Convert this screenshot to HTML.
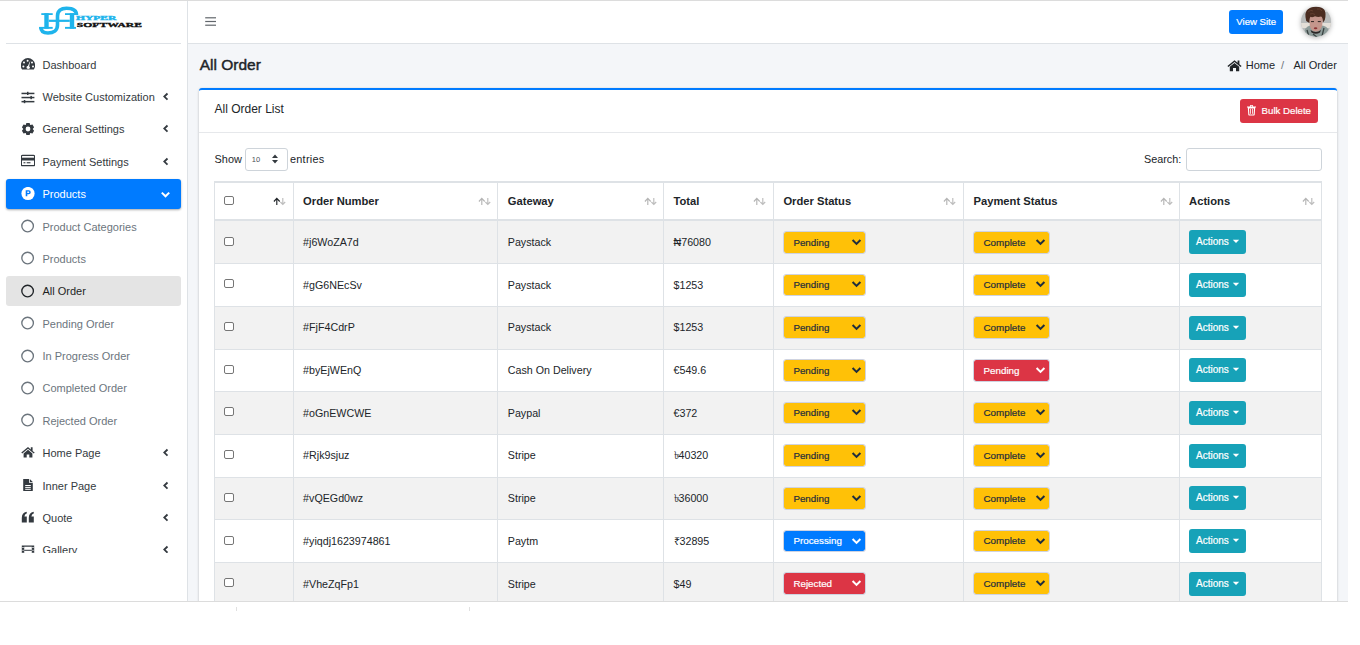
<!DOCTYPE html>
<html><head><meta charset="utf-8"><title>All Order</title>
<style>
html,body{margin:0;padding:0;}
body{width:1360px;height:645px;position:relative;overflow:hidden;background:#fff;font-family:"Liberation Sans", sans-serif;}
.t{position:absolute;white-space:pre;line-height:1;}
svg{display:block}
</style></head><body>
<div style="position:absolute;left:0px;top:0px;width:1348px;height:1px;background:#dcdcdc"></div><div style="position:absolute;left:0px;top:1px;width:187px;height:600px;background:#fff"></div><div style="position:absolute;left:187px;top:1px;width:1px;height:600px;background:#dee2e6"></div><div style="position:absolute;left:188px;top:1px;width:1160px;height:42px;background:#fff"></div><div style="position:absolute;left:188px;top:43px;width:1160px;height:1px;background:#dee2e6"></div><div style="position:absolute;left:188px;top:44px;width:1160px;height:557px;background:#f4f6f9"></div><div style="position:absolute;left:0px;top:601px;width:1348px;height:1px;background:#dcdcdc"></div><div style="position:absolute;left:236px;top:607px;width:1px;height:4px;background:#e0e0e0"></div><div style="position:absolute;left:469px;top:607px;width:1px;height:4px;background:#e0e0e0"></div><svg style="position:absolute;left:34px;top:4px;" width="112" height="35" viewBox="0 0 112 35">
<g fill="#1eb4ec">
 <rect x="7.3" y="9.2" width="11.4" height="1.8"/>
 <rect x="10.3" y="9.2" width="4.4" height="15.5"/>
 <rect x="5.2" y="22.9" width="13.5" height="1.9"/>
 <rect x="14.7" y="15.7" width="21.1" height="2.2"/>
 <rect x="35.8" y="9.2" width="4.4" height="15.5"/>
 <rect x="31" y="9.2" width="12.4" height="1.8"/>
 <rect x="31" y="22.9" width="11" height="1.9"/>
</g>
<path d="M6.8 23 C6.8 27.6, 10 29, 14 29 C19.5 29, 23.5 26.5, 23.5 21 L23.5 12 C23.5 6.5, 27 4.2, 32.5 4.2 C38.5 4.2, 42.5 6, 42.5 11" fill="none" stroke="#1eb4ec" stroke-width="3.6"/>
<text x="41.9" y="15.6" textLength="40.6" lengthAdjust="spacingAndGlyphs" font-family="Liberation Serif" font-weight="700" font-size="5.3" fill="#1eb4ec" stroke="#1eb4ec" stroke-width="0.35">HYPER</text>
<text x="42.8" y="22.5" textLength="65.2" lengthAdjust="spacingAndGlyphs" font-family="Liberation Serif" font-weight="700" font-size="7" fill="#111" stroke="#111" stroke-width="0.35">SOFTWARE</text>
</svg><div style="position:absolute;left:6px;top:43px;width:175px;height:1px;background:#dee2e6"></div><div style="position:absolute;left:0;top:44px;width:187px;height:509px;overflow:hidden"><svg style="position:absolute;left:20.5px;top:13.200000000000003px;" width="14" height="14" viewBox="0 0 14 14"><path d="M1.1 12.5 A7.2 7.2 0 1 1 12.8 12.5 Z" fill="#343a40"/><g fill="#fff"><circle cx="3" cy="5.4" r="1"/><circle cx="6.6" cy="3.7" r="1"/><circle cx="11" cy="5.4" r="1"/><circle cx="2.4" cy="9.4" r="1"/><circle cx="12" cy="9.4" r="1"/><path d="M9.4 3.2 L8.1 9.6 L9 9.9 Q9.2 12 7.2 12 Q5.4 12 5.5 10.3 Q5.6 9.2 6.9 9.1 Z"/></g></svg><div class="t" style="left:42.5px;top:15.69px;font-size:11px;color:#343a40">Dashboard</div><svg style="position:absolute;left:20.5px;top:45.58px;" width="14" height="14" viewBox="0 0 14 14"><g fill="#343a40"><rect x="0.5" y="2.7" width="12.9" height="1.5"/><rect x="0.5" y="6.8" width="12.9" height="1.5"/><rect x="0.5" y="10.9" width="12.9" height="1.5"/><rect x="6" y="1.8" width="1.5" height="3.2"/><rect x="9.4" y="5.9" width="1.5" height="3.3"/><rect x="2.8" y="10" width="1.5" height="3.2"/></g></svg><div class="t" style="left:42.5px;top:48.07px;font-size:11px;color:#343a40">Website Customization</div><svg style="position:absolute;left:161px;top:47.08px;" width="10" height="11" viewBox="0 0 10 11"><path d="M6.5 2.5 L3.3 5.6 L6.5 8.7" fill="none" stroke="#343a40" stroke-width="1.8"/></svg><svg style="position:absolute;left:20.5px;top:77.95999999999998px;" width="14" height="14" viewBox="0 0 14 14"><path d="M4.75 2.88 L5.38 0.91 L8.62 0.91 L9.25 2.88 L9.45 2.99 L11.46 2.55 L13.08 5.36 L11.70 6.89 L11.70 7.11 L13.08 8.64 L11.46 11.45 L9.45 11.01 L9.25 11.12 L8.62 13.09 L5.38 13.09 L4.75 11.12 L4.55 11.01 L2.54 11.45 L0.92 8.64 L2.30 7.11 L2.30 6.89 L0.92 5.36 L2.54 2.55 L4.55 2.99Z M9.4 7 A2.4 2.4 0 1 0 4.6 7 A2.4 2.4 0 1 0 9.4 7 Z" fill="#343a40" fill-rule="evenodd"/></svg><div class="t" style="left:42.5px;top:80.45px;font-size:11px;color:#343a40">General Settings</div><svg style="position:absolute;left:161px;top:79.46px;" width="10" height="11" viewBox="0 0 10 11"><path d="M6.5 2.5 L3.3 5.6 L6.5 8.7" fill="none" stroke="#343a40" stroke-width="1.8"/></svg><svg style="position:absolute;left:20.5px;top:110.34px;" width="14" height="14" viewBox="0 0 14 14"><rect x="0.35" y="1.4" width="13.3" height="10.3" rx="1.2" fill="none" stroke="#343a40" stroke-width="1.3"/><rect x="0.5" y="3.7" width="13" height="2.8" fill="#343a40"/><rect x="2.5" y="8.2" width="1.9" height="1.1" fill="#343a40"/><rect x="5.7" y="8.2" width="3.8" height="1.1" fill="#343a40"/></svg><div class="t" style="left:42.5px;top:112.83px;font-size:11px;color:#343a40">Payment Settings</div><svg style="position:absolute;left:161px;top:111.84px;" width="10" height="11" viewBox="0 0 10 11"><path d="M6.5 2.5 L3.3 5.6 L6.5 8.7" fill="none" stroke="#343a40" stroke-width="1.8"/></svg><div style="position:absolute;left:6px;top:135.02px;width:175px;height:30px;background:#007bff;border-radius:3px;box-shadow:0 1px 3px rgba(0,0,0,.12),0 1px 2px rgba(0,0,0,.24)"></div><svg style="position:absolute;left:20.5px;top:142.72px;" width="14" height="14" viewBox="0 0 14 14"><circle cx="7" cy="6.5" r="6.6" fill="#fff"/><path d="M4.7 3.2 L7.7 3.2 A2.05 2.05 0 0 1 7.7 7.3 L6.3 7.3 L6.3 9.2 L4.7 9.2 Z M6.3 4.6 L6.3 5.9 L7.6 5.9 A0.65 0.65 0 0 0 7.6 4.6 Z" fill="#007bff" fill-rule="evenodd"/></svg><div class="t" style="left:42.5px;top:145.21px;font-size:11px;color:#fff">Products</div><svg style="position:absolute;left:160px;top:144.52px;" width="11" height="11" viewBox="0 0 11 11"><path d="M1.8 3.6 L5.5 7.3 L9.2 3.6" fill="none" stroke="#fff" stroke-width="2"/></svg><svg style="position:absolute;left:20.5px;top:175.1px;" width="14" height="14" viewBox="0 0 14 14"><circle cx="6.6" cy="7" r="5.8" fill="none" stroke="#6c757d" stroke-width="1.35"/></svg><div class="t" style="left:42.5px;top:177.59px;font-size:11px;color:#6c757d">Product Categories</div><svg style="position:absolute;left:20.5px;top:207.48000000000002px;" width="14" height="14" viewBox="0 0 14 14"><circle cx="6.6" cy="7" r="5.8" fill="none" stroke="#6c757d" stroke-width="1.35"/></svg><div class="t" style="left:42.5px;top:209.97px;font-size:11px;color:#6c757d">Products</div><div style="position:absolute;left:6px;top:232.16000000000003px;width:175px;height:30px;background:#e4e4e4;border-radius:3px"></div><svg style="position:absolute;left:20.5px;top:239.86px;" width="14" height="14" viewBox="0 0 14 14"><circle cx="6.6" cy="7" r="5.8" fill="none" stroke="#212529" stroke-width="1.35"/></svg><div class="t" style="left:42.5px;top:242.35px;font-size:11px;color:#1f1f1f">All Order</div><svg style="position:absolute;left:20.5px;top:272.24px;" width="14" height="14" viewBox="0 0 14 14"><circle cx="6.6" cy="7" r="5.8" fill="none" stroke="#6c757d" stroke-width="1.35"/></svg><div class="t" style="left:42.5px;top:274.73px;font-size:11px;color:#6c757d">Pending Order</div><svg style="position:absolute;left:20.5px;top:304.62px;" width="14" height="14" viewBox="0 0 14 14"><circle cx="6.6" cy="7" r="5.8" fill="none" stroke="#6c757d" stroke-width="1.35"/></svg><div class="t" style="left:42.5px;top:307.11px;font-size:11px;color:#6c757d">In Progress Order</div><svg style="position:absolute;left:20.5px;top:337.0px;" width="14" height="14" viewBox="0 0 14 14"><circle cx="6.6" cy="7" r="5.8" fill="none" stroke="#6c757d" stroke-width="1.35"/></svg><div class="t" style="left:42.5px;top:339.49px;font-size:11px;color:#6c757d">Completed Order</div><svg style="position:absolute;left:20.5px;top:369.38px;" width="14" height="14" viewBox="0 0 14 14"><circle cx="6.6" cy="7" r="5.8" fill="none" stroke="#6c757d" stroke-width="1.35"/></svg><div class="t" style="left:42.5px;top:371.87px;font-size:11px;color:#6c757d">Rejected Order</div><svg style="position:absolute;left:20.5px;top:400.76000000000005px;" width="14" height="14" viewBox="0 0 14 14"><path d="M7 2 L0.3 7.6 L1.2 8.6 L7 3.8 L12.8 8.6 L13.7 7.6 L11.6 5.9 L11.6 2.2 L9.8 2.2 L9.8 4.4 Z" fill="#343a40"/><path d="M2.6 8.4 L7 4.8 L11.4 8.4 L11.4 12.6 L8.3 12.6 L8.3 9.6 L5.7 9.6 L5.7 12.6 L2.6 12.6 Z" fill="#343a40"/></svg><div class="t" style="left:42.5px;top:404.25px;font-size:11px;color:#343a40">Home Page</div><svg style="position:absolute;left:161px;top:403.26000000000005px;" width="10" height="11" viewBox="0 0 10 11"><path d="M6.5 2.5 L3.3 5.6 L6.5 8.7" fill="none" stroke="#343a40" stroke-width="1.8"/></svg><svg style="position:absolute;left:20.5px;top:434.14000000000004px;" width="14" height="14" viewBox="0 0 14 14"><path d="M2.2 1 L8 1 L8 4.8 L11.8 4.8 L11.8 12.4 Q11.8 13 11.2 13 L2.8 13 Q2.2 13 2.2 12.4 Z M8.8 1 L11.8 4 L8.8 4 Z" fill="#343a40"/><g fill="#fff"><rect x="4.2" y="7" width="5.6" height="1"/><rect x="4.2" y="8.9" width="5.6" height="1"/><rect x="4.2" y="10.8" width="5.6" height="1"/></g></svg><div class="t" style="left:42.5px;top:436.63px;font-size:11px;color:#343a40">Inner Page</div><svg style="position:absolute;left:161px;top:435.64000000000004px;" width="10" height="11" viewBox="0 0 10 11"><path d="M6.5 2.5 L3.3 5.6 L6.5 8.7" fill="none" stroke="#343a40" stroke-width="1.8"/></svg><svg style="position:absolute;left:20.5px;top:465.5200000000001px;" width="14" height="14" viewBox="0 0 14 14"><path d="M0.8 12.5 L0.8 8 Q0.8 2.8 5.6 1.8 L5.9 3.3 Q3.6 4 3.4 6.4 L5.8 6.4 L5.8 12.5 Z M7.8 12.5 L7.8 8 Q7.8 2.8 12.6 1.8 L12.9 3.3 Q10.6 4 10.4 6.4 L12.8 6.4 L12.8 12.5 Z" fill="#343a40"/></svg><div class="t" style="left:42.5px;top:469.01px;font-size:11px;color:#343a40">Quote</div><svg style="position:absolute;left:161px;top:468.0200000000001px;" width="10" height="11" viewBox="0 0 10 11"><path d="M6.5 2.5 L3.3 5.6 L6.5 8.7" fill="none" stroke="#343a40" stroke-width="1.8"/></svg><svg style="position:absolute;left:20.5px;top:498.9000000000001px;" width="14" height="14" viewBox="0 0 14 14"><path d="M0.8 2.5 L13.2 2.5 L13.2 12 L0.8 12 Z M3.2 3.8 L3.2 10.7 L10.8 10.7 L10.8 3.8 Z" fill="#343a40" fill-rule="evenodd"/><g fill="#fff"><rect x="1.4" y="4" width="1.2" height="1"/><rect x="1.4" y="6.8" width="1.2" height="1"/><rect x="1.4" y="9.6" width="1.2" height="1"/><rect x="11.4" y="4" width="1.2" height="1"/><rect x="11.4" y="6.8" width="1.2" height="1"/><rect x="11.4" y="9.6" width="1.2" height="1"/></g><rect x="3.2" y="6.8" width="7.6" height="1" fill="#343a40"/></svg><div class="t" style="left:42.5px;top:501.39px;font-size:11px;color:#343a40">Gallery</div><svg style="position:absolute;left:161px;top:500.4000000000001px;" width="10" height="11" viewBox="0 0 10 11"><path d="M6.5 2.5 L3.3 5.6 L6.5 8.7" fill="none" stroke="#343a40" stroke-width="1.8"/></svg></div><svg style="position:absolute;left:204px;top:16px;" width="13" height="10" viewBox="0 0 13 10"><g fill="#62676c"><rect x="1.2" y="1.2" width="10.8" height="1.2"/><rect x="1.2" y="4.9" width="10.8" height="1.2"/><rect x="1.2" y="8.6" width="10.8" height="1.2"/></g></svg><div style="position:absolute;left:1229px;top:10px;width:54px;height:24px;background:#007bff;border-radius:3px"></div><div class="t" style="left:1236.3px;top:17.07px;font-size:9.6px;font-weight:400;color:#fff;-webkit-text-stroke:0.2px #fff">View Site</div><svg style="position:absolute;left:1298px;top:4px;filter:drop-shadow(0 1.5px 2.5px rgba(0,0,0,.28))" width="36" height="36" viewBox="0 0 36 36">
<defs><clipPath id="av"><circle cx="18" cy="17.7" r="15"/></clipPath></defs>
<g clip-path="url(#av)">
<rect x="0" y="0" width="36" height="36" fill="#b9bcbc"/>
<rect x="0" y="0" width="36" height="8" fill="#d8d8d8"/>
<rect x="0" y="19" width="36" height="5" fill="#e4dfd8"/>
<path d="M5.5 36 L7 25 Q10 21 13 21.5 L18 27 L23 21.5 Q28 21.5 30 25 L32 30 L31 36 Z" fill="#8e9c9a"/>
<path d="M9 26 L12 36 M26 24 L23 36 M15 30 L20 34" stroke="#3a4342" stroke-width="1.3" fill="none"/>
<path d="M11.3 15 Q11.5 9.5 18 9.5 Q24.5 9.5 24.8 15 L24.2 21.5 Q22.8 27.6 17.8 27.6 Q13 27.6 11.8 21.5 Z" fill="#c4968c"/>
<path d="M12.5 26 Q18 30 23 26 L22 28.5 Q18 31 13.5 28.5 Z" fill="#2b2626"/>
<path d="M8.2 17 Q6 8 10 5 Q13 2.2 18 2.6 Q24 2.4 26.5 6 Q28.5 9.5 26.8 16 L25 18.5 Q24.8 13 23 12.6 Q20 13.6 17 12.2 Q14 13.8 12.6 12.8 Q11.3 14 11.4 19 Z" fill="#4a2c20"/><path d="M10 8 Q13 5 15 7 M19 5 Q22 4 24 7 M12 10 Q15 9 17 10.5" stroke="#6a4434" stroke-width="0.8" fill="none"/>
<rect x="13" y="17" width="3" height="1.1" fill="#3b2e2a"/><rect x="19.8" y="17" width="3" height="1.1" fill="#3b2e2a"/>
<ellipse cx="17.6" cy="24.3" rx="1.8" ry="1" fill="#8d3535"/>
</g></svg><div class="t" style="left:199.7px;top:56.68px;font-size:15.5px;font-weight:400;color:#212529;-webkit-text-stroke:0.45px #212529">All Order</div><svg style="position:absolute;left:1227px;top:59px;" width="15" height="13" viewBox="0 0 15 13"><path d="M7.5 1.2 L0.4 7 L1.4 8 L7.5 3 L13.6 8 L14.6 7 L12.4 5.2 L12.4 1.6 L10.6 1.6 L10.6 3.7 Z" fill="#212529"/><path d="M2.8 7.8 L7.5 4 L12.2 7.8 L12.2 12.2 L9 12.2 L9 9 L6 9 L6 12.2 L2.8 12.2 Z" fill="#212529"/></svg><div class="t" style="left:1245.7px;top:60.49px;font-size:11px;font-weight:400;color:#212529;">Home</div><div class="t" style="left:1281px;top:60.49px;font-size:11px;font-weight:400;color:#6c757d;">/</div><div class="t" style="left:1293.5px;top:60.49px;font-size:11px;font-weight:400;color:#212529;">All Order</div><div style="position:absolute;left:0;top:0;width:1348px;height:601px;overflow:hidden"><div style="position:absolute;left:199px;top:88px;width:1138px;height:520px;background:#fff;border-top:2px solid #007bff;border-radius:3px;box-shadow:0 0 1px rgba(0,0,0,.125),0 1px 3px rgba(0,0,0,.2);box-sizing:border-box"></div><div style="position:absolute;left:199px;top:132px;width:1138px;height:1px;background:#e6e8eb"></div></div><div class="t" style="left:214.5px;top:103.44px;font-size:12px;font-weight:400;color:#212529;">All Order List</div><div style="position:absolute;left:1240px;top:99px;width:78px;height:24px;background:#dc3545;border-radius:3px"></div><svg style="position:absolute;left:1246px;top:104px;" width="11" height="12" viewBox="0 0 11 12"><path d="M1 2.4 L10 2.4 L10 3.5 L1 3.5 Z M3.8 2.4 L4.3 0.9 L6.7 0.9 L7.2 2.4 L6.3 2.4 L6.1 1.8 L4.9 1.8 L4.7 2.4 Z M1.8 3.6 L9.2 3.6 L8.7 10.8 Q8.6 11.4 8 11.4 L3 11.4 Q2.4 11.4 2.3 10.8 Z M3 4.4 L3.4 10.5 L7.6 10.5 L8 4.4 Z" fill="#fff" fill-rule="evenodd"/><g fill="#fff"><rect x="4.2" y="4.8" width="0.8" height="5"/><rect x="6" y="4.8" width="0.8" height="5"/></g></svg><div class="t" style="left:1261.6px;top:105.62px;font-size:9.66px;font-weight:400;color:#fff;-webkit-text-stroke:0.2px #fff">Bulk Delete</div><div class="t" style="left:214.6px;top:153.77px;font-size:10.9px;font-weight:400;color:#212529;">Show</div><div style="position:absolute;left:245px;top:148px;width:43px;height:22.6px;background:#fff;border:1px solid #ced4da;border-radius:3px;box-sizing:border-box"></div><div class="t" style="left:251.8px;top:155.85px;font-size:7.5px;font-weight:400;color:#495057;">10</div><svg style="position:absolute;left:271px;top:153px;" width="8" height="12" viewBox="0 0 8 12"><path d="M4 1.5 L7 5 L1 5 Z M4 10.5 L7 7 L1 7 Z" fill="#343a40"/></svg><div class="t" style="left:290px;top:153.77px;font-size:10.9px;font-weight:400;color:#212529;letter-spacing:0.25px">entries</div><div class="t" style="left:1144px;top:153.86px;font-size:10.8px;font-weight:400;color:#212529;">Search:</div><div style="position:absolute;left:1186px;top:148px;width:135.5px;height:22.6px;background:#fff;border:1px solid #ced4da;border-radius:3px;box-sizing:border-box"></div><div style="position:absolute;left:0;top:0;width:1348px;height:601px;overflow:hidden"><div style="position:absolute;left:214px;top:181px;width:1107.5px;height:2px;background:#dee2e6"></div><div style="position:absolute;left:214px;top:183px;width:1107.5px;height:36px;background:#fff"></div><div style="position:absolute;left:214px;top:219px;width:1107.5px;height:2px;background:#dee2e6"></div><div style="position:absolute;left:214px;top:221px;width:1107.5px;height:42.5px;background:#f2f2f2"></div><div style="position:absolute;left:214px;top:263.5px;width:1107.5px;height:42.5px;background:#fff"></div><div style="position:absolute;left:214px;top:263.0px;width:1107.5px;height:1px;background:#dee2e6"></div><div style="position:absolute;left:214px;top:306px;width:1107.5px;height:43px;background:#f2f2f2"></div><div style="position:absolute;left:214px;top:305.5px;width:1107.5px;height:1px;background:#dee2e6"></div><div style="position:absolute;left:214px;top:349px;width:1107.5px;height:42.5px;background:#fff"></div><div style="position:absolute;left:214px;top:348.5px;width:1107.5px;height:1px;background:#dee2e6"></div><div style="position:absolute;left:214px;top:391.5px;width:1107.5px;height:42.5px;background:#f2f2f2"></div><div style="position:absolute;left:214px;top:391.0px;width:1107.5px;height:1px;background:#dee2e6"></div><div style="position:absolute;left:214px;top:434px;width:1107.5px;height:43px;background:#fff"></div><div style="position:absolute;left:214px;top:433.5px;width:1107.5px;height:1px;background:#dee2e6"></div><div style="position:absolute;left:214px;top:477px;width:1107.5px;height:42.5px;background:#f2f2f2"></div><div style="position:absolute;left:214px;top:476.5px;width:1107.5px;height:1px;background:#dee2e6"></div><div style="position:absolute;left:214px;top:519.5px;width:1107.5px;height:42.799999999999955px;background:#fff"></div><div style="position:absolute;left:214px;top:519.0px;width:1107.5px;height:1px;background:#dee2e6"></div><div style="position:absolute;left:214px;top:562.3px;width:1107.5px;height:42.700000000000045px;background:#f2f2f2"></div><div style="position:absolute;left:214px;top:561.8px;width:1107.5px;height:1px;background:#dee2e6"></div><div style="position:absolute;left:214px;top:181px;width:1px;height:430px;background:#dee2e6"></div><div style="position:absolute;left:293px;top:181px;width:1px;height:430px;background:#dee2e6"></div><div style="position:absolute;left:497px;top:181px;width:1px;height:430px;background:#dee2e6"></div><div style="position:absolute;left:663px;top:181px;width:1px;height:430px;background:#dee2e6"></div><div style="position:absolute;left:773px;top:181px;width:1px;height:430px;background:#dee2e6"></div><div style="position:absolute;left:963px;top:181px;width:1px;height:430px;background:#dee2e6"></div><div style="position:absolute;left:1179px;top:181px;width:1px;height:430px;background:#dee2e6"></div><div style="position:absolute;left:1321px;top:181px;width:1px;height:430px;background:#dee2e6"></div><svg style="position:absolute;left:273.4px;top:197px;" width="13" height="9" viewBox="0 0 13 9"><path d="M3.8 8 L3.8 1.8 M0.9 4.5 L3.8 1.4 L6.7 4.5" fill="none" stroke="#212529" stroke-width="1.15"/><path d="M9.8 1 L9.8 7.2 M7.4 5 L9.8 7.5 L12.2 5" fill="none" stroke="#bdbdbd" stroke-width="1.15"/></svg><div class="t" style="left:303.1px;top:195.62px;font-size:11.2px;font-weight:700;color:#212529;">Order Number</div><svg style="position:absolute;left:477.6px;top:197px;" width="13" height="9" viewBox="0 0 13 9"><path d="M3.8 8 L3.8 1.8 M0.9 4.5 L3.8 1.4 L6.7 4.5" fill="none" stroke="#b5b5b5" stroke-width="1.15"/><path d="M9.8 1 L9.8 7.2 M7.4 5 L9.8 7.5 L12.2 5" fill="none" stroke="#bdbdbd" stroke-width="1.15"/></svg><div class="t" style="left:507.8px;top:195.62px;font-size:11.2px;font-weight:700;color:#212529;">Gateway</div><svg style="position:absolute;left:643.5px;top:197px;" width="13" height="9" viewBox="0 0 13 9"><path d="M3.8 8 L3.8 1.8 M0.9 4.5 L3.8 1.4 L6.7 4.5" fill="none" stroke="#b5b5b5" stroke-width="1.15"/><path d="M9.8 1 L9.8 7.2 M7.4 5 L9.8 7.5 L12.2 5" fill="none" stroke="#bdbdbd" stroke-width="1.15"/></svg><div class="t" style="left:673.5px;top:195.62px;font-size:11.2px;font-weight:700;color:#212529;">Total</div><svg style="position:absolute;left:753.4px;top:197px;" width="13" height="9" viewBox="0 0 13 9"><path d="M3.8 8 L3.8 1.8 M0.9 4.5 L3.8 1.4 L6.7 4.5" fill="none" stroke="#b5b5b5" stroke-width="1.15"/><path d="M9.8 1 L9.8 7.2 M7.4 5 L9.8 7.5 L12.2 5" fill="none" stroke="#bdbdbd" stroke-width="1.15"/></svg><div class="t" style="left:783.4px;top:195.62px;font-size:11.2px;font-weight:700;color:#212529;">Order Status</div><svg style="position:absolute;left:943.4px;top:197px;" width="13" height="9" viewBox="0 0 13 9"><path d="M3.8 8 L3.8 1.8 M0.9 4.5 L3.8 1.4 L6.7 4.5" fill="none" stroke="#b5b5b5" stroke-width="1.15"/><path d="M9.8 1 L9.8 7.2 M7.4 5 L9.8 7.5 L12.2 5" fill="none" stroke="#bdbdbd" stroke-width="1.15"/></svg><div class="t" style="left:973.5px;top:195.62px;font-size:11.2px;font-weight:700;color:#212529;">Payment Status</div><svg style="position:absolute;left:1159.5px;top:197px;" width="13" height="9" viewBox="0 0 13 9"><path d="M3.8 8 L3.8 1.8 M0.9 4.5 L3.8 1.4 L6.7 4.5" fill="none" stroke="#b5b5b5" stroke-width="1.15"/><path d="M9.8 1 L9.8 7.2 M7.4 5 L9.8 7.5 L12.2 5" fill="none" stroke="#bdbdbd" stroke-width="1.15"/></svg><div class="t" style="left:1189.1px;top:195.62px;font-size:11.2px;font-weight:700;color:#212529;">Actions</div><svg style="position:absolute;left:1301.5px;top:197px;" width="13" height="9" viewBox="0 0 13 9"><path d="M3.8 8 L3.8 1.8 M0.9 4.5 L3.8 1.4 L6.7 4.5" fill="none" stroke="#b5b5b5" stroke-width="1.15"/><path d="M9.8 1 L9.8 7.2 M7.4 5 L9.8 7.5 L12.2 5" fill="none" stroke="#bdbdbd" stroke-width="1.15"/></svg><div style="position:absolute;left:224px;top:196px;width:9.6px;height:9px;border:1px solid #767676;border-radius:2px;box-sizing:border-box;background:#fff"></div><div style="position:absolute;left:224px;top:236.95px;width:9.6px;height:9px;border:1px solid #767676;border-radius:2px;box-sizing:border-box;background:#fff"></div><div class="t" style="left:303.1px;top:237.14px;font-size:10.7px;font-weight:400;color:#212529;">#j6WoZA7d</div><div class="t" style="left:507.8px;top:237.14px;font-size:10.7px;font-weight:400;color:#212529;">Paystack</div><div class="t" style="left:673.5px;top:237.14px;font-size:10.7px;font-weight:400;color:#212529;">&#8358;76080</div><div style="position:absolute;left:782.9px;top:231.04999999999998px;width:83.0px;height:22.6px;background:#ffc107;border:1px solid #cfd3e0;border-radius:3px;box-sizing:border-box;background-clip:padding-box"></div><div class="t" style="left:793.4px;top:237.65px;font-size:9.8px;font-weight:400;color:#1f2d3d;-webkit-text-stroke:0.2px #1f2d3d">Pending</div><svg style="position:absolute;left:851.4px;top:236.95px;" width="11" height="10" viewBox="0 0 11 10"><path d="M1.6 3 L5.5 6.9 L9.4 3" fill="none" stroke="#1f2d3d" stroke-width="2"/></svg><div style="position:absolute;left:973.0px;top:231.04999999999998px;width:76.5px;height:22.6px;background:#ffc107;border:1px solid #cfd3e0;border-radius:3px;box-sizing:border-box;background-clip:padding-box"></div><div class="t" style="left:983.5px;top:237.65px;font-size:9.8px;font-weight:400;color:#1f2d3d;-webkit-text-stroke:0.2px #1f2d3d">Complete</div><svg style="position:absolute;left:1035.0px;top:236.95px;" width="11" height="10" viewBox="0 0 11 10"><path d="M1.6 3 L5.5 6.9 L9.4 3" fill="none" stroke="#1f2d3d" stroke-width="2"/></svg><div style="position:absolute;left:1189px;top:230.45px;width:57px;height:24px;background:#17a2b8;border-radius:3px"></div><div class="t" style="left:1196px;top:237.48px;font-size:10px;font-weight:400;color:#fff;-webkit-text-stroke:0.2px #fff">Actions</div><svg style="position:absolute;left:1232px;top:239.45px;" width="8" height="5" viewBox="0 0 8 5"><path d="M0.8 0.8 L7.2 0.8 L4 4 Z" fill="#fff"/></svg><div style="position:absolute;left:224px;top:279.45px;width:9.6px;height:9px;border:1px solid #767676;border-radius:2px;box-sizing:border-box;background:#fff"></div><div class="t" style="left:303.1px;top:279.64px;font-size:10.7px;font-weight:400;color:#212529;">#gG6NEcSv</div><div class="t" style="left:507.8px;top:279.64px;font-size:10.7px;font-weight:400;color:#212529;">Paystack</div><div class="t" style="left:673.5px;top:279.64px;font-size:10.7px;font-weight:400;color:#212529;">$1253</div><div style="position:absolute;left:782.9px;top:273.55px;width:83.0px;height:22.6px;background:#ffc107;border:1px solid #cfd3e0;border-radius:3px;box-sizing:border-box;background-clip:padding-box"></div><div class="t" style="left:793.4px;top:280.15px;font-size:9.8px;font-weight:400;color:#1f2d3d;-webkit-text-stroke:0.2px #1f2d3d">Pending</div><svg style="position:absolute;left:851.4px;top:279.45px;" width="11" height="10" viewBox="0 0 11 10"><path d="M1.6 3 L5.5 6.9 L9.4 3" fill="none" stroke="#1f2d3d" stroke-width="2"/></svg><div style="position:absolute;left:973.0px;top:273.55px;width:76.5px;height:22.6px;background:#ffc107;border:1px solid #cfd3e0;border-radius:3px;box-sizing:border-box;background-clip:padding-box"></div><div class="t" style="left:983.5px;top:280.15px;font-size:9.8px;font-weight:400;color:#1f2d3d;-webkit-text-stroke:0.2px #1f2d3d">Complete</div><svg style="position:absolute;left:1035.0px;top:279.45px;" width="11" height="10" viewBox="0 0 11 10"><path d="M1.6 3 L5.5 6.9 L9.4 3" fill="none" stroke="#1f2d3d" stroke-width="2"/></svg><div style="position:absolute;left:1189px;top:272.95px;width:57px;height:24px;background:#17a2b8;border-radius:3px"></div><div class="t" style="left:1196px;top:279.99px;font-size:10px;font-weight:400;color:#fff;-webkit-text-stroke:0.2px #fff">Actions</div><svg style="position:absolute;left:1232px;top:281.95px;" width="8" height="5" viewBox="0 0 8 5"><path d="M0.8 0.8 L7.2 0.8 L4 4 Z" fill="#fff"/></svg><div style="position:absolute;left:224px;top:322.2px;width:9.6px;height:9px;border:1px solid #767676;border-radius:2px;box-sizing:border-box;background:#fff"></div><div class="t" style="left:303.1px;top:322.39px;font-size:10.7px;font-weight:400;color:#212529;">#FjF4CdrP</div><div class="t" style="left:507.8px;top:322.39px;font-size:10.7px;font-weight:400;color:#212529;">Paystack</div><div class="t" style="left:673.5px;top:322.39px;font-size:10.7px;font-weight:400;color:#212529;">$1253</div><div style="position:absolute;left:782.9px;top:316.3px;width:83.0px;height:22.6px;background:#ffc107;border:1px solid #cfd3e0;border-radius:3px;box-sizing:border-box;background-clip:padding-box"></div><div class="t" style="left:793.4px;top:322.90px;font-size:9.8px;font-weight:400;color:#1f2d3d;-webkit-text-stroke:0.2px #1f2d3d">Pending</div><svg style="position:absolute;left:851.4px;top:322.2px;" width="11" height="10" viewBox="0 0 11 10"><path d="M1.6 3 L5.5 6.9 L9.4 3" fill="none" stroke="#1f2d3d" stroke-width="2"/></svg><div style="position:absolute;left:973.0px;top:316.3px;width:76.5px;height:22.6px;background:#ffc107;border:1px solid #cfd3e0;border-radius:3px;box-sizing:border-box;background-clip:padding-box"></div><div class="t" style="left:983.5px;top:322.90px;font-size:9.8px;font-weight:400;color:#1f2d3d;-webkit-text-stroke:0.2px #1f2d3d">Complete</div><svg style="position:absolute;left:1035.0px;top:322.2px;" width="11" height="10" viewBox="0 0 11 10"><path d="M1.6 3 L5.5 6.9 L9.4 3" fill="none" stroke="#1f2d3d" stroke-width="2"/></svg><div style="position:absolute;left:1189px;top:315.7px;width:57px;height:24px;background:#17a2b8;border-radius:3px"></div><div class="t" style="left:1196px;top:322.74px;font-size:10px;font-weight:400;color:#fff;-webkit-text-stroke:0.2px #fff">Actions</div><svg style="position:absolute;left:1232px;top:324.7px;" width="8" height="5" viewBox="0 0 8 5"><path d="M0.8 0.8 L7.2 0.8 L4 4 Z" fill="#fff"/></svg><div style="position:absolute;left:224px;top:364.95px;width:9.6px;height:9px;border:1px solid #767676;border-radius:2px;box-sizing:border-box;background:#fff"></div><div class="t" style="left:303.1px;top:365.14px;font-size:10.7px;font-weight:400;color:#212529;">#byEjWEnQ</div><div class="t" style="left:507.8px;top:365.14px;font-size:10.7px;font-weight:400;color:#212529;">Cash On Delivery</div><div class="t" style="left:673.5px;top:365.14px;font-size:10.7px;font-weight:400;color:#212529;">&#8364;549.6</div><div style="position:absolute;left:782.9px;top:359.05px;width:83.0px;height:22.6px;background:#ffc107;border:1px solid #cfd3e0;border-radius:3px;box-sizing:border-box;background-clip:padding-box"></div><div class="t" style="left:793.4px;top:365.65px;font-size:9.8px;font-weight:400;color:#1f2d3d;-webkit-text-stroke:0.2px #1f2d3d">Pending</div><svg style="position:absolute;left:851.4px;top:364.95px;" width="11" height="10" viewBox="0 0 11 10"><path d="M1.6 3 L5.5 6.9 L9.4 3" fill="none" stroke="#1f2d3d" stroke-width="2"/></svg><div style="position:absolute;left:973.0px;top:359.05px;width:76.5px;height:22.6px;background:#dc3545;border:1px solid #cfd3e0;border-radius:3px;box-sizing:border-box;background-clip:padding-box"></div><div class="t" style="left:983.5px;top:365.65px;font-size:9.8px;font-weight:400;color:#fff;-webkit-text-stroke:0.2px #fff">Pending</div><svg style="position:absolute;left:1035.0px;top:364.95px;" width="11" height="10" viewBox="0 0 11 10"><path d="M1.6 3 L5.5 6.9 L9.4 3" fill="none" stroke="#fff" stroke-width="2"/></svg><div style="position:absolute;left:1189px;top:358.45px;width:57px;height:24px;background:#17a2b8;border-radius:3px"></div><div class="t" style="left:1196px;top:365.49px;font-size:10px;font-weight:400;color:#fff;-webkit-text-stroke:0.2px #fff">Actions</div><svg style="position:absolute;left:1232px;top:367.45px;" width="8" height="5" viewBox="0 0 8 5"><path d="M0.8 0.8 L7.2 0.8 L4 4 Z" fill="#fff"/></svg><div style="position:absolute;left:224px;top:407.45px;width:9.6px;height:9px;border:1px solid #767676;border-radius:2px;box-sizing:border-box;background:#fff"></div><div class="t" style="left:303.1px;top:407.64px;font-size:10.7px;font-weight:400;color:#212529;">#oGnEWCWE</div><div class="t" style="left:507.8px;top:407.64px;font-size:10.7px;font-weight:400;color:#212529;">Paypal</div><div class="t" style="left:673.5px;top:407.64px;font-size:10.7px;font-weight:400;color:#212529;">&#8364;372</div><div style="position:absolute;left:782.9px;top:401.55px;width:83.0px;height:22.6px;background:#ffc107;border:1px solid #cfd3e0;border-radius:3px;box-sizing:border-box;background-clip:padding-box"></div><div class="t" style="left:793.4px;top:408.15px;font-size:9.8px;font-weight:400;color:#1f2d3d;-webkit-text-stroke:0.2px #1f2d3d">Pending</div><svg style="position:absolute;left:851.4px;top:407.45px;" width="11" height="10" viewBox="0 0 11 10"><path d="M1.6 3 L5.5 6.9 L9.4 3" fill="none" stroke="#1f2d3d" stroke-width="2"/></svg><div style="position:absolute;left:973.0px;top:401.55px;width:76.5px;height:22.6px;background:#ffc107;border:1px solid #cfd3e0;border-radius:3px;box-sizing:border-box;background-clip:padding-box"></div><div class="t" style="left:983.5px;top:408.15px;font-size:9.8px;font-weight:400;color:#1f2d3d;-webkit-text-stroke:0.2px #1f2d3d">Complete</div><svg style="position:absolute;left:1035.0px;top:407.45px;" width="11" height="10" viewBox="0 0 11 10"><path d="M1.6 3 L5.5 6.9 L9.4 3" fill="none" stroke="#1f2d3d" stroke-width="2"/></svg><div style="position:absolute;left:1189px;top:400.95px;width:57px;height:24px;background:#17a2b8;border-radius:3px"></div><div class="t" style="left:1196px;top:407.99px;font-size:10px;font-weight:400;color:#fff;-webkit-text-stroke:0.2px #fff">Actions</div><svg style="position:absolute;left:1232px;top:409.95px;" width="8" height="5" viewBox="0 0 8 5"><path d="M0.8 0.8 L7.2 0.8 L4 4 Z" fill="#fff"/></svg><div style="position:absolute;left:224px;top:450.2px;width:9.6px;height:9px;border:1px solid #767676;border-radius:2px;box-sizing:border-box;background:#fff"></div><div class="t" style="left:303.1px;top:450.39px;font-size:10.7px;font-weight:400;color:#212529;">#Rjk9sjuz</div><div class="t" style="left:507.8px;top:450.39px;font-size:10.7px;font-weight:400;color:#212529;">Stripe</div><div class="t" style="left:673.5px;top:450.39px;font-size:10.7px;font-weight:400;color:#212529;">&#2547;40320</div><div style="position:absolute;left:782.9px;top:444.3px;width:83.0px;height:22.6px;background:#ffc107;border:1px solid #cfd3e0;border-radius:3px;box-sizing:border-box;background-clip:padding-box"></div><div class="t" style="left:793.4px;top:450.90px;font-size:9.8px;font-weight:400;color:#1f2d3d;-webkit-text-stroke:0.2px #1f2d3d">Pending</div><svg style="position:absolute;left:851.4px;top:450.2px;" width="11" height="10" viewBox="0 0 11 10"><path d="M1.6 3 L5.5 6.9 L9.4 3" fill="none" stroke="#1f2d3d" stroke-width="2"/></svg><div style="position:absolute;left:973.0px;top:444.3px;width:76.5px;height:22.6px;background:#ffc107;border:1px solid #cfd3e0;border-radius:3px;box-sizing:border-box;background-clip:padding-box"></div><div class="t" style="left:983.5px;top:450.90px;font-size:9.8px;font-weight:400;color:#1f2d3d;-webkit-text-stroke:0.2px #1f2d3d">Complete</div><svg style="position:absolute;left:1035.0px;top:450.2px;" width="11" height="10" viewBox="0 0 11 10"><path d="M1.6 3 L5.5 6.9 L9.4 3" fill="none" stroke="#1f2d3d" stroke-width="2"/></svg><div style="position:absolute;left:1189px;top:443.7px;width:57px;height:24px;background:#17a2b8;border-radius:3px"></div><div class="t" style="left:1196px;top:450.74px;font-size:10px;font-weight:400;color:#fff;-webkit-text-stroke:0.2px #fff">Actions</div><svg style="position:absolute;left:1232px;top:452.7px;" width="8" height="5" viewBox="0 0 8 5"><path d="M0.8 0.8 L7.2 0.8 L4 4 Z" fill="#fff"/></svg><div style="position:absolute;left:224px;top:492.95px;width:9.6px;height:9px;border:1px solid #767676;border-radius:2px;box-sizing:border-box;background:#fff"></div><div class="t" style="left:303.1px;top:493.14px;font-size:10.7px;font-weight:400;color:#212529;">#vQEGd0wz</div><div class="t" style="left:507.8px;top:493.14px;font-size:10.7px;font-weight:400;color:#212529;">Stripe</div><div class="t" style="left:673.5px;top:493.14px;font-size:10.7px;font-weight:400;color:#212529;">&#2547;36000</div><div style="position:absolute;left:782.9px;top:487.05px;width:83.0px;height:22.6px;background:#ffc107;border:1px solid #cfd3e0;border-radius:3px;box-sizing:border-box;background-clip:padding-box"></div><div class="t" style="left:793.4px;top:493.65px;font-size:9.8px;font-weight:400;color:#1f2d3d;-webkit-text-stroke:0.2px #1f2d3d">Pending</div><svg style="position:absolute;left:851.4px;top:492.95px;" width="11" height="10" viewBox="0 0 11 10"><path d="M1.6 3 L5.5 6.9 L9.4 3" fill="none" stroke="#1f2d3d" stroke-width="2"/></svg><div style="position:absolute;left:973.0px;top:487.05px;width:76.5px;height:22.6px;background:#ffc107;border:1px solid #cfd3e0;border-radius:3px;box-sizing:border-box;background-clip:padding-box"></div><div class="t" style="left:983.5px;top:493.65px;font-size:9.8px;font-weight:400;color:#1f2d3d;-webkit-text-stroke:0.2px #1f2d3d">Complete</div><svg style="position:absolute;left:1035.0px;top:492.95px;" width="11" height="10" viewBox="0 0 11 10"><path d="M1.6 3 L5.5 6.9 L9.4 3" fill="none" stroke="#1f2d3d" stroke-width="2"/></svg><div style="position:absolute;left:1189px;top:486.45px;width:57px;height:24px;background:#17a2b8;border-radius:3px"></div><div class="t" style="left:1196px;top:493.49px;font-size:10px;font-weight:400;color:#fff;-webkit-text-stroke:0.2px #fff">Actions</div><svg style="position:absolute;left:1232px;top:495.45px;" width="8" height="5" viewBox="0 0 8 5"><path d="M0.8 0.8 L7.2 0.8 L4 4 Z" fill="#fff"/></svg><div style="position:absolute;left:224px;top:535.6px;width:9.6px;height:9px;border:1px solid #767676;border-radius:2px;box-sizing:border-box;background:#fff"></div><div class="t" style="left:303.1px;top:535.79px;font-size:10.7px;font-weight:400;color:#212529;">#yiqdj1623974861</div><div class="t" style="left:507.8px;top:535.79px;font-size:10.7px;font-weight:400;color:#212529;">Paytm</div><div class="t" style="left:673.5px;top:535.79px;font-size:10.7px;font-weight:400;color:#212529;">&#8377;32895</div><div style="position:absolute;left:782.9px;top:529.7px;width:83.0px;height:22.6px;background:#007bff;border:1px solid #cfd3e0;border-radius:3px;box-sizing:border-box;background-clip:padding-box"></div><div class="t" style="left:793.4px;top:536.30px;font-size:9.8px;font-weight:400;color:#fff;-webkit-text-stroke:0.2px #fff">Processing</div><svg style="position:absolute;left:851.4px;top:535.6px;" width="11" height="10" viewBox="0 0 11 10"><path d="M1.6 3 L5.5 6.9 L9.4 3" fill="none" stroke="#fff" stroke-width="2"/></svg><div style="position:absolute;left:973.0px;top:529.7px;width:76.5px;height:22.6px;background:#ffc107;border:1px solid #cfd3e0;border-radius:3px;box-sizing:border-box;background-clip:padding-box"></div><div class="t" style="left:983.5px;top:536.30px;font-size:9.8px;font-weight:400;color:#1f2d3d;-webkit-text-stroke:0.2px #1f2d3d">Complete</div><svg style="position:absolute;left:1035.0px;top:535.6px;" width="11" height="10" viewBox="0 0 11 10"><path d="M1.6 3 L5.5 6.9 L9.4 3" fill="none" stroke="#1f2d3d" stroke-width="2"/></svg><div style="position:absolute;left:1189px;top:529.1px;width:57px;height:24px;background:#17a2b8;border-radius:3px"></div><div class="t" style="left:1196px;top:536.13px;font-size:10px;font-weight:400;color:#fff;-webkit-text-stroke:0.2px #fff">Actions</div><svg style="position:absolute;left:1232px;top:538.1px;" width="8" height="5" viewBox="0 0 8 5"><path d="M0.8 0.8 L7.2 0.8 L4 4 Z" fill="#fff"/></svg><div style="position:absolute;left:224px;top:578.35px;width:9.6px;height:9px;border:1px solid #767676;border-radius:2px;box-sizing:border-box;background:#fff"></div><div class="t" style="left:303.1px;top:578.54px;font-size:10.7px;font-weight:400;color:#212529;">#VheZqFp1</div><div class="t" style="left:507.8px;top:578.54px;font-size:10.7px;font-weight:400;color:#212529;">Stripe</div><div class="t" style="left:673.5px;top:578.54px;font-size:10.7px;font-weight:400;color:#212529;">$49</div><div style="position:absolute;left:782.9px;top:572.45px;width:83.0px;height:22.6px;background:#dc3545;border:1px solid #cfd3e0;border-radius:3px;box-sizing:border-box;background-clip:padding-box"></div><div class="t" style="left:793.4px;top:579.05px;font-size:9.8px;font-weight:400;color:#fff;-webkit-text-stroke:0.2px #fff">Rejected</div><svg style="position:absolute;left:851.4px;top:578.35px;" width="11" height="10" viewBox="0 0 11 10"><path d="M1.6 3 L5.5 6.9 L9.4 3" fill="none" stroke="#fff" stroke-width="2"/></svg><div style="position:absolute;left:973.0px;top:572.45px;width:76.5px;height:22.6px;background:#ffc107;border:1px solid #cfd3e0;border-radius:3px;box-sizing:border-box;background-clip:padding-box"></div><div class="t" style="left:983.5px;top:579.05px;font-size:9.8px;font-weight:400;color:#1f2d3d;-webkit-text-stroke:0.2px #1f2d3d">Complete</div><svg style="position:absolute;left:1035.0px;top:578.35px;" width="11" height="10" viewBox="0 0 11 10"><path d="M1.6 3 L5.5 6.9 L9.4 3" fill="none" stroke="#1f2d3d" stroke-width="2"/></svg><div style="position:absolute;left:1189px;top:571.85px;width:57px;height:24px;background:#17a2b8;border-radius:3px"></div><div class="t" style="left:1196px;top:578.88px;font-size:10px;font-weight:400;color:#fff;-webkit-text-stroke:0.2px #fff">Actions</div><svg style="position:absolute;left:1232px;top:580.85px;" width="8" height="5" viewBox="0 0 8 5"><path d="M0.8 0.8 L7.2 0.8 L4 4 Z" fill="#fff"/></svg></div>
</body></html>
